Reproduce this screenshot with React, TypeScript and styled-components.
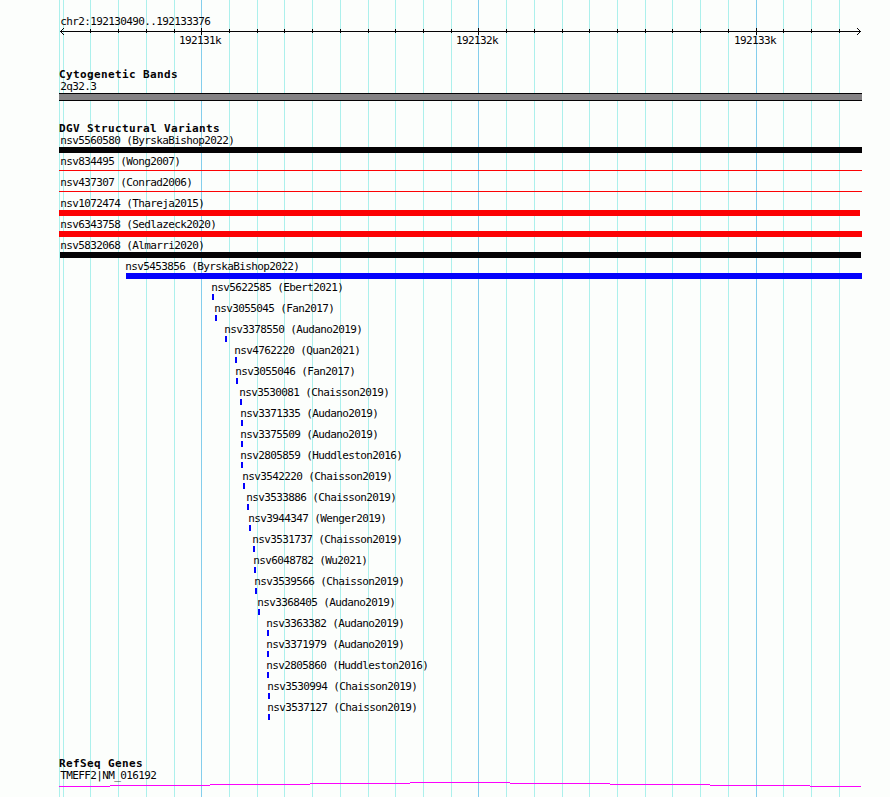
import styled, { createGlobalStyle } from "styled-components";

const GlobalStyle = createGlobalStyle`
  body {
    margin: 0;
    background: #fcfefc;
    overflow: hidden;
  }
`;

const LEFT = 59;
const RIGHT = 862;

const minorLines = [
  59, 63, 90, 118, 146, 174, 229, 257, 284, 312, 340, 368, 395, 423, 451, 506,
  534, 562, 589, 617, 645, 672, 700, 728, 783, 811, 839,
];

const majorLines = [
  { x: 201, label: "192131k" },
  { x: 478, label: "192132k" },
  { x: 756, label: "192133k" },
];

const density = [
  { x: 59, w: 51, y: 4 },
  { x: 110, w: 100, y: 3 },
  { x: 210, w: 100, y: 2 },
  { x: 310, w: 100, y: 1 },
  { x: 410, w: 100, y: 0 },
  { x: 510, w: 100, y: 1 },
  { x: 610, w: 100, y: 2 },
  { x: 710, w: 100, y: 3 },
  { x: 810, w: 51, y: 4 },
];

interface Variant {
  id: string;
  study: string;
  start: number;
  end?: number;
  color?: string;
  thin?: boolean;
}

const variants: Variant[] = [
  { id: "nsv5560580", study: "ByrskaBishop2022", start: 59, end: 862, color: "#040204" },
  { id: "nsv834495", study: "Wong2007", start: 59, end: 862, color: "#fc0204", thin: true },
  { id: "nsv437307", study: "Conrad2006", start: 59, end: 862, color: "#fc0204", thin: true },
  { id: "nsv1072474", study: "Thareja2015", start: 59, end: 860, color: "#fc0204" },
  { id: "nsv6343758", study: "Sedlazeck2020", start: 59, end: 862, color: "#fc0204" },
  { id: "nsv5832068", study: "Almarri2020", start: 60, end: 861, color: "#040204" },
  { id: "nsv5453856", study: "ByrskaBishop2022", start: 126, end: 862 },
  { id: "nsv5622585", study: "Ebert2021", start: 212 },
  { id: "nsv3055045", study: "Fan2017", start: 215 },
  { id: "nsv3378550", study: "Audano2019", start: 225 },
  { id: "nsv4762220", study: "Quan2021", start: 235 },
  { id: "nsv3055046", study: "Fan2017", start: 236 },
  { id: "nsv3530081", study: "Chaisson2019", start: 240 },
  { id: "nsv3371335", study: "Audano2019", start: 241 },
  { id: "nsv3375509", study: "Audano2019", start: 241 },
  { id: "nsv2805859", study: "Huddleston2016", start: 241 },
  { id: "nsv3542220", study: "Chaisson2019", start: 243 },
  { id: "nsv3533886", study: "Chaisson2019", start: 247 },
  { id: "nsv3944347", study: "Wenger2019", start: 249 },
  { id: "nsv3531737", study: "Chaisson2019", start: 253 },
  { id: "nsv6048782", study: "Wu2021", start: 254 },
  { id: "nsv3539566", study: "Chaisson2019", start: 255 },
  { id: "nsv3368405", study: "Audano2019", start: 258 },
  { id: "nsv3363382", study: "Audano2019", start: 267 },
  { id: "nsv3371979", study: "Audano2019", start: 267 },
  { id: "nsv2805860", study: "Huddleston2016", start: 267 },
  { id: "nsv3530994", study: "Chaisson2019", start: 268 },
  { id: "nsv3537127", study: "Chaisson2019", start: 268 },
];

const Browser = styled.main`
  position: relative;
  width: 890px;
  height: 797px;
  overflow: hidden;
  color: #040204;
  font-family: "DejaVu Sans Mono", monospace;
  font-size: 11px;
  letter-spacing: -0.6225px;
`;

const GridLines = styled.svg`
  position: absolute;
  inset: 0;
`;

const Tracks = styled.div`
  position: relative;
  display: flex;
  flex-direction: column;
`;

const Ruler = styled.svg`
  display: block;
  height: 68px;
`;

const Track = styled.section<{ $height: number }>`
  height: ${(props) => props.$height}px;
`;

const Title = styled.h2`
  height: 12px;
  margin: 0 0 0 59px;
  font-size: 11px;
  font-weight: 700;
  line-height: 13px;
  letter-spacing: 0.3775px;
  white-space: pre;
`;

const Label = styled.p<{ $start?: number }>`
  height: 13px;
  margin: 0 0 0 ${(props) => Math.max(60, (props.$start ?? 0) - 1) + 0.3}px;
  line-height: 13px;
  white-space: pre;
`;

const Band = styled.div`
  box-sizing: border-box;
  width: ${RIGHT - LEFT}px;
  height: 8px;
  margin-left: ${LEFT}px;
  background: #848284;
  border: solid #040204;
  border-width: 1px 0;
`;

const Row = styled.div`
  height: 21px;
`;

const Bar = styled.div<{ $start: number; $end: number; $color: string; $thin?: boolean }>`
  width: ${(props) => props.$end - props.$start}px;
  height: ${(props) => (props.$thin ? 1 : 6)}px;
  margin-top: ${(props) => (props.$thin ? 2 : 0)}px;
  margin-left: ${(props) => props.$start}px;
  background: ${(props) => props.$color};
`;

const Density = styled.svg`
  display: block;
`;

function VariantRow({ variant }: { variant: Variant }) {
  const { id, study, start, end = start + 2, color = "#0402fc", thin } = variant;

  return (
    <Row>
      <Label $start={start}>{`${id} (${study})`}</Label>
      <Bar $start={start} $end={end} $color={color} $thin={thin} />
    </Row>
  );
}

function App() {
  return (
    <>
      <GlobalStyle />
      <Browser>
        <GridLines width="890" height="797" shapeRendering="crispEdges">
          {minorLines.map((x) => (
            <rect key={x} x={x} y="0" width="1" height="797" fill="#acf0ec" />
          ))}
          {majorLines.map(({ x }) => (
            <rect key={x} x={x} y="0" width="1" height="797" fill="#84ceec" />
          ))}
        </GridLines>

        <Tracks>
          <Ruler width="890" height="68" fill="#040204">
            <text x="60.3" y="25">chr2:192130490..192133376</text>
            <g shapeRendering="crispEdges">
              <rect x="60" y="31" width="801" height="1" />
              {minorLines.slice(2).map((x) => (
                <rect key={x} x={x} y="29" width="1" height="4" />
              ))}
              {majorLines.map(({ x }) => (
                <rect key={x} x={x} y="28" width="1" height="7" />
              ))}
              {[1, 2, 3].map((d) => (
                <g key={d}>
                  <rect x={60 + d} y={31 - d} width="1" height="1" />
                  <rect x={60 + d} y={31 + d} width="1" height="1" />
                  <rect x={860 - d} y={31 - d} width="1" height="1" />
                  <rect x={860 - d} y={31 + d} width="1" height="1" />
                </g>
              ))}
            </g>
            {majorLines.map(({ x, label }) => (
              <text key={x} x={x - 22} y="44">{label}</text>
            ))}
          </Ruler>

          <Track $height={54}>
            <Title>Cytogenetic Bands</Title>
            <Label>2q32.3</Label>
            <Band />
          </Track>

          <Track $height={635}>
            <Title>DGV Structural Variants</Title>
            {variants.map((variant) => (
              <VariantRow key={variant.id} variant={variant} />
            ))}
          </Track>

          <Track $height={40}>
            <Title>RefSeq Genes</Title>
            <Label>TMEFF2|NM_016192</Label>
            <Density width="890" height="5" shapeRendering="crispEdges">
              {density.map(({ x, w, y }) => (
                <rect key={x} x={x} y={y} width={w} height="1" fill="#fc02fc" />
              ))}
            </Density>
          </Track>
        </Tracks>
      </Browser>
    </>
  );
}

export default App;
